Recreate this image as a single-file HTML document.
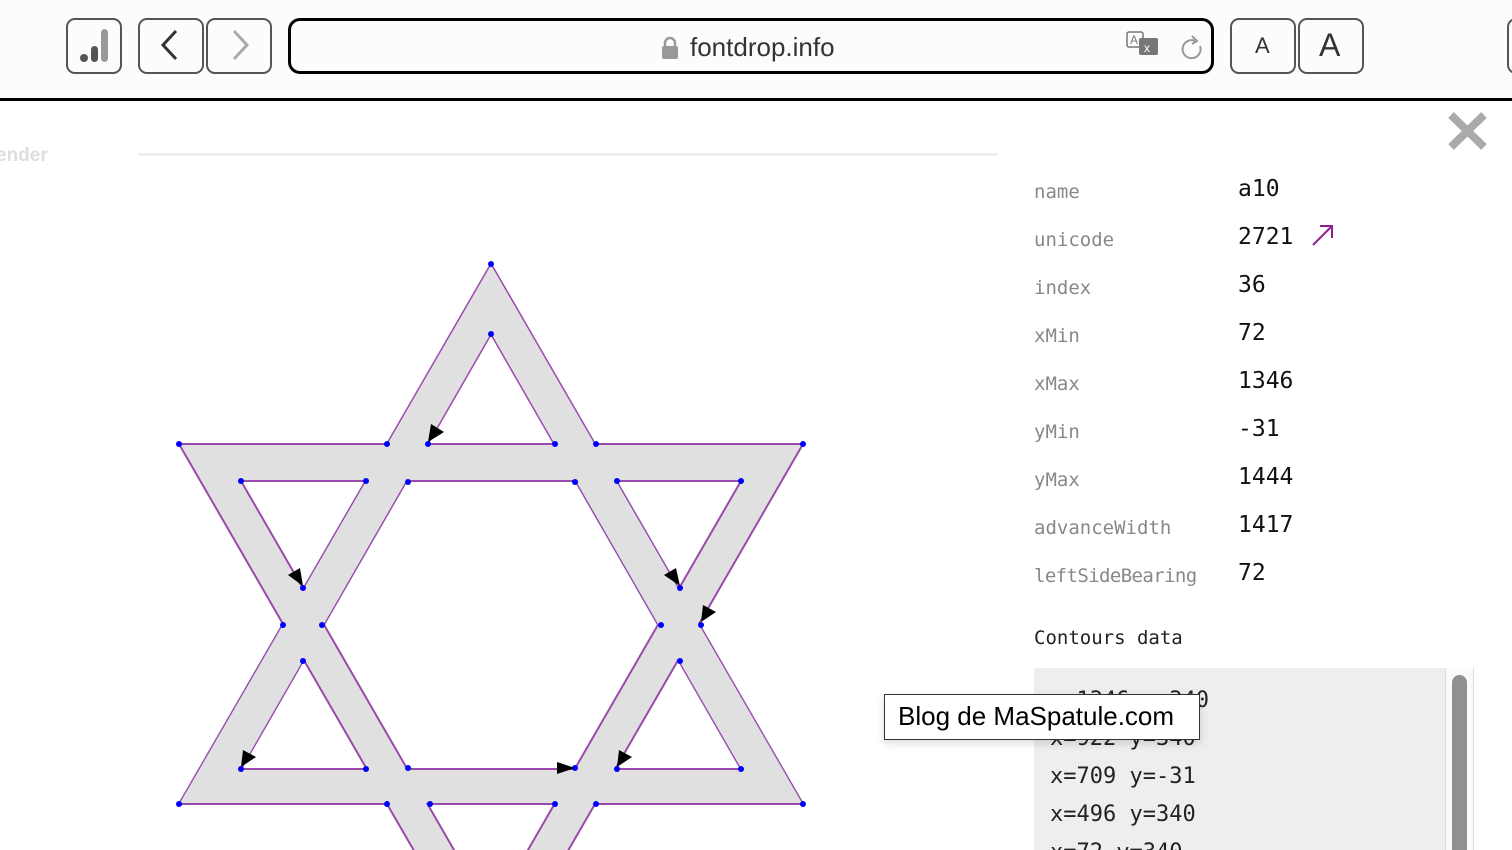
<!DOCTYPE html>
<html><head><style>
html,body{margin:0;width:1512px;height:850px;overflow:hidden}
body{background:#fff;font-family:"Liberation Sans",sans-serif;position:relative}
.tb{position:absolute;left:0;top:0;width:1512px;height:98px;background:#fcfcfc;border-bottom:3px solid #000}
.btn{position:absolute;border:2px solid #555;border-radius:9px;box-sizing:border-box;background:#fcfcfc}
.lab{position:absolute;left:1034px;font-family:"DejaVu Sans Mono",monospace;font-size:19px;color:#888}
.val{position:absolute;left:1238px;font-family:"DejaVu Sans Mono",monospace;font-size:23px;color:#111}
.cd{position:absolute;left:16px;font-family:"DejaVu Sans Mono",monospace;font-size:22px;color:#222}
</style></head><body>
<div class="tb">
 <div class="btn" style="left:66px;top:18px;width:56px;height:56px"></div>
 <svg style="position:absolute;left:66px;top:18px" width="56" height="56"><circle cx="18" cy="40" r="4" fill="#555"/><rect x="25" y="28" width="7" height="16" rx="3.5" fill="#555"/><rect x="35" y="11" width="7" height="33" rx="3.5" fill="#999"/></svg>
 <div class="btn" style="left:138px;top:18px;width:66px;height:56px"></div>
 <div class="btn" style="left:206px;top:18px;width:66px;height:56px"></div>
 <svg style="position:absolute;left:138px;top:18px" width="134" height="56"><path d="M38 13 L25 27 L38 41" stroke="#333" stroke-width="3" fill="none"/><path d="M96 13 L109 27 L96 41" stroke="#aaa" stroke-width="3" fill="none"/></svg>
 <div class="btn" style="left:288px;top:18px;width:926px;height:56px;border:3px solid #000;border-radius:12px"></div>
 <svg style="position:absolute;left:660px;top:36px" width="20" height="24"><path d="M5 10 V7 a5 5 0 0 1 10 0 V10" stroke="#999" stroke-width="2.5" fill="none"/><rect x="2" y="10" width="16" height="13" rx="2" fill="#999"/></svg>
 <div style="position:absolute;left:690px;top:32px;font-size:26px;color:#333">fontdrop.info</div>
 <svg style="position:absolute;left:1125px;top:30px" width="90" height="32"><rect x="2" y="2" width="16" height="15" rx="2" fill="none" stroke="#777" stroke-width="1.5"/><text x="5" y="14" font-size="12" fill="#777" font-family="Liberation Sans">A</text><rect x="14" y="8" width="19" height="17" rx="2" fill="#777"/><text x="19" y="22" font-size="12" fill="#fff" font-family="Liberation Sans">x</text><path d="M72 12 a9 9 0 1 0 3 4" stroke="#999" stroke-width="2" fill="none"/><path d="M67 6 L72 11 L67 14" stroke="#999" stroke-width="2" fill="none"/></svg>
 <div class="btn" style="left:1230px;top:18px;width:66px;height:56px"></div>
 <div class="btn" style="left:1298px;top:18px;width:66px;height:56px"></div>
 <div style="position:absolute;left:1255px;top:33px;font-size:22px;color:#333">A</div>
 <div style="position:absolute;left:1319px;top:27px;font-size:32px;color:#333">A</div>
 <div class="btn" style="left:1507px;top:18px;width:20px;height:56px"></div>
</div>
<div style="position:absolute;left:-4px;top:145px;font-size:19px;color:#ddd;font-weight:bold">ender</div>
<div style="position:absolute;left:138px;top:153px;width:860px;height:3px;background:#eee"></div>
<svg style="position:absolute;left:1446px;top:111px" width="44" height="40"><path d="M5 4 L38 36 M38 4 L5 36" stroke="#aaa" stroke-width="8"/></svg>
<svg style="position:absolute;left:0;top:0" width="1000" height="850">
 <g fill="#e0e0e0" fill-rule="evenodd" stroke="#9a4aaa" stroke-width="2">
  <path d="M491 264 L803 804 L179 804 Z M491 334 L241 769 L741 769 Z"/>
  <path d="M179 444 L803 444 L491 984 Z M241 481 L741 481 L491 914 Z"/>
 </g>
 <path fill="#e0e0e0" fill-rule="evenodd" d="M491 265 L802 803 L180 803 Z M491 333 L240 770 L742 770 Z"/>
 <g fill="#00f">
  <circle cx="491" cy="264" r="3"/><circle cx="491" cy="334" r="3"/><circle cx="179" cy="444" r="3"/><circle cx="387" cy="444" r="3"/><circle cx="428" cy="444" r="3"/><circle cx="555" cy="444" r="3"/><circle cx="596" cy="444" r="3"/><circle cx="803" cy="444" r="3"/>
  <circle cx="241" cy="481" r="3"/><circle cx="366" cy="481" r="3"/><circle cx="408" cy="482" r="3"/><circle cx="575" cy="482" r="3"/><circle cx="617" cy="481" r="3"/><circle cx="741" cy="481" r="3"/>
  <circle cx="303" cy="588" r="3"/><circle cx="680" cy="588" r="3"/><circle cx="283" cy="625" r="3"/><circle cx="322" cy="625" r="3"/><circle cx="661" cy="625" r="3"/><circle cx="701" cy="625" r="3"/>
  <circle cx="303" cy="661" r="3"/><circle cx="680" cy="661" r="3"/><circle cx="241" cy="769" r="3"/><circle cx="366" cy="769" r="3"/><circle cx="408" cy="768" r="3"/><circle cx="575" cy="768" r="3"/><circle cx="617" cy="769" r="3"/><circle cx="741" cy="769" r="3"/>
  <circle cx="179" cy="804" r="3"/><circle cx="387" cy="804" r="3"/><circle cx="430" cy="804" r="3"/><circle cx="555" cy="804" r="3"/><circle cx="596" cy="804" r="3"/><circle cx="803" cy="804" r="3"/>
 </g>
 <g fill="#000">
  <path d="M428 442 L431 424 L444 432 Z"/><path d="M303 586 L288 575 L300 568 Z"/><path d="M680 586 L664 575 L676 568 Z"/><path d="M701 622 L703 605 L716 612 Z"/>
  <path d="M241 767 L243 750 L256 757 Z"/><path d="M575 768 L557 762 L557 774 Z"/><path d="M617 767 L619 750 L632 757 Z"/>
 </g>
</svg>
<div class="lab" style="top:181px">name</div><div class="val" style="top:176px">a10</div>
<div class="lab" style="top:229px">unicode</div><div class="val" style="top:224px">2721</div>
<svg style="position:absolute;left:1310px;top:223px" width="26" height="26"><path d="M3 22 L22 3 M10 3 H22 V15" stroke="#902090" stroke-width="2" fill="none"/></svg>
<div class="lab" style="top:277px">index</div><div class="val" style="top:272px">36</div>
<div class="lab" style="top:325px">xMin</div><div class="val" style="top:320px">72</div>
<div class="lab" style="top:373px">xMax</div><div class="val" style="top:368px">1346</div>
<div class="lab" style="top:421px">yMin</div><div class="val" style="top:416px">-31</div>
<div class="lab" style="top:469px">yMax</div><div class="val" style="top:464px">1444</div>
<div class="lab" style="top:517px">advanceWidth</div><div class="val" style="top:512px">1417</div>
<div class="lab" style="top:565px;letter-spacing:-0.6px">leftSideBearing</div><div class="val" style="top:560px">72</div>
<div class="lab" style="top:627px;color:#222">Contours data</div>
<div style="position:absolute;left:1034px;top:668px;width:411px;height:182px;background:#eee;overflow:hidden">
<div class="cd" style="top:20px">x=1346 y=340</div>
<div class="cd" style="top:58px">x=922 y=340</div>
<div class="cd" style="top:96px">x=709 y=-31</div>
<div class="cd" style="top:134px">x=496 y=340</div>
<div class="cd" style="top:172px">x=72 y=340</div>
</div>
<div style="position:absolute;left:1445px;top:668px;width:29px;height:182px;background:#fafafa;border-left:1px solid #ddd;border-right:1px solid #ddd;box-sizing:border-box"></div>
<div style="position:absolute;left:1452px;top:675px;width:15px;height:175px;background:#909090;border-radius:8px 8px 0 0"></div>
<div style="position:absolute;left:884px;top:694px;width:316px;height:46px;box-sizing:border-box;border:1px solid #333;background:#fff;box-shadow:0 3px 8px rgba(0,0,0,.15);font-size:26px;padding:6px 0 0 13px;color:#000">Blog de MaSpatule.com</div>
</body></html>
